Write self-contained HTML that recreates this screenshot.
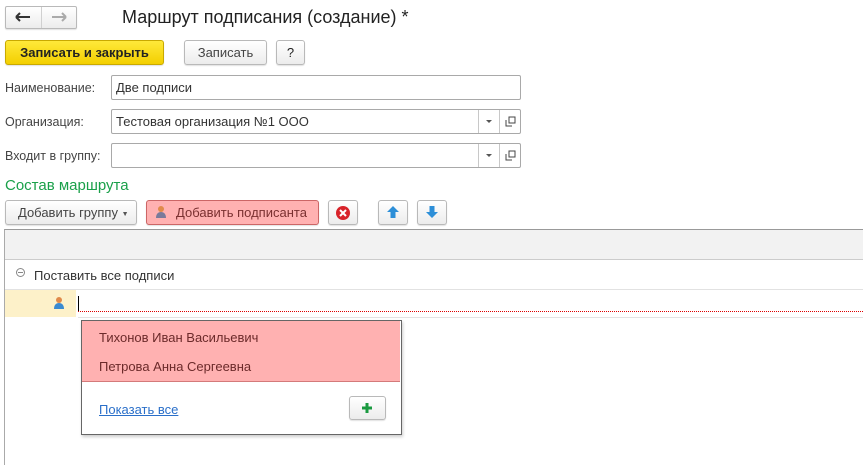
<!DOCTYPE html>
<html><head><meta charset="utf-8"><style>
*{box-sizing:border-box;margin:0;padding:0}
body{width:863px;height:465px;overflow:hidden;background:#fff;font-family:"Liberation Sans",Arial,sans-serif;font-size:13px;color:#333;position:relative}
.a{position:absolute}
.btn{position:absolute;border:1px solid #b9b9b9;border-radius:3px;background:linear-gradient(#fff,#ececec);text-align:center;color:#444;box-shadow:0 1px 1px rgba(0,0,0,.12)}
.inp{position:absolute;border:1px solid #a9a9a9;border-radius:2px;background:#fff;padding-left:4px;line-height:24px;color:#333}
.lbl{position:absolute;color:#444;font-size:12.5px}
</style></head><body>
<div class="btn" style="left:5px;top:6px;width:72px;height:23px;border-radius:2px"></div>
<div class="a" style="left:41px;top:7px;width:1px;height:21px;background:#d0d0d0"></div>
<svg class="a" style="left:15px;top:12px" width="16" height="10"><path d="M1 5h14M1 5l4-4M1 5l4 4" stroke="#333" stroke-width="2" fill="none"/></svg>
<svg class="a" style="left:51px;top:12px" width="16" height="10"><path d="M1 5h14M15 5l-4-4M15 5l-4 4" stroke="#aaa" stroke-width="2" fill="none"/></svg>
<div class="a" style="left:122px;top:7px;font-size:18px;color:#222">Маршрут подписания (создание) *</div>

<div class="btn" style="left:5px;top:40px;width:159px;height:25px;background:linear-gradient(#ffe93a,#f3cf00);border-color:#c9a900;color:#222;font-weight:bold;line-height:23px">Записать и закрыть</div>
<div class="btn" style="left:184px;top:40px;width:83px;height:25px;line-height:23px">Записать</div>
<div class="btn" style="left:276px;top:40px;width:29px;height:25px;line-height:23px;color:#222">?</div>

<div class="lbl" style="left:5px;top:81px">Наименование:</div>
<div class="inp" style="left:111px;top:75px;width:410px;height:25px">Две подписи</div>
<div class="lbl" style="left:5px;top:115px">Организация:</div>
<div class="inp" style="left:111px;top:109px;width:410px;height:25px">Тестовая организация №1 ООО</div>
<div class="lbl" style="left:5px;top:149px">Входит в группу:</div>
<div class="inp" style="left:111px;top:143px;width:410px;height:25px"></div>
<div class="a" style="left:478px;top:110px;width:1px;height:23px;background:#c8c8c8"></div>
<div class="a" style="left:499px;top:110px;width:1px;height:23px;background:#c8c8c8"></div>
<div class="a" style="left:478px;top:144px;width:1px;height:23px;background:#c8c8c8"></div>
<div class="a" style="left:499px;top:144px;width:1px;height:23px;background:#c8c8c8"></div>
<div class="a" style="left:486px;top:120px;border:3px solid transparent;border-top:3px solid #555"></div>
<div class="a" style="left:486px;top:154px;border:3px solid transparent;border-top:3px solid #555"></div>
<svg class="a" style="left:505px;top:116px" width="11" height="11"><path d="M4 1h6v6h-6z M1 4v6h6" fill="none" stroke="#444"/></svg>
<svg class="a" style="left:505px;top:150px" width="11" height="11"><path d="M4 1h6v6h-6z M1 4v6h6" fill="none" stroke="#444"/></svg>

<div class="a" style="left:5px;top:177px;font-size:15px;color:#1aa04a">Состав маршрута</div>
<div class="btn" style="left:5px;top:200px;width:132px;height:25px;line-height:23px;text-align:left;padding-left:12px">Добавить группу <span style="font-size:7px;color:#555;vertical-align:1px">&#9660;</span></div>
<div class="btn" style="left:146px;top:200px;width:173px;height:25px;line-height:23px;background:#ffb1b1;border-color:#c66;color:#7a3030;padding-left:18px">Добавить подписанта</div>
<svg class="a" style="left:155px;top:205px" width="12" height="14"><circle cx="6" cy="4" r="3" fill="#e08a4a"/><path d="M1 13c0-4 2-6 5-6s5 2 5 6z" fill="#7a7a9a"/></svg>
<div class="btn" style="left:328px;top:200px;width:30px;height:25px"></div>
<svg class="a" style="left:335px;top:205px" width="16" height="16"><circle cx="8" cy="8" r="7" fill="#d8232a"/><path d="M5 5l6 6M11 5l-6 6" stroke="#fff" stroke-width="2"/></svg>
<div class="btn" style="left:378px;top:200px;width:30px;height:25px"></div>
<svg class="a" style="left:386px;top:205px" width="14" height="14"><path d="M7 1l6 6h-3.5v6h-5v-6h-3.5z" fill="#2d8fd8"/></svg>
<div class="btn" style="left:417px;top:200px;width:30px;height:25px"></div>
<svg class="a" style="left:425px;top:205px" width="14" height="14"><path d="M7 13l6-6h-3.5v-6h-5v6h-3.5z" fill="#2d8fd8"/></svg>

<div class="a" style="left:4px;top:229px;width:859px;height:236px;border-left:1px solid #aaa;border-top:1px solid #999"></div>
<div class="a" style="left:5px;top:230px;width:858px;height:30px;background:#f2f2f2;border-bottom:1px solid #ccc"></div>
<div class="a" style="left:16px;top:268px;width:9px;height:9px;border:1px solid #888;border-radius:50%"></div>
<div class="a" style="left:18px;top:272px;width:5px;height:1px;background:#888"></div>
<div class="a" style="left:34px;top:268px;color:#333">Поставить все подписи</div>
<div class="a" style="left:5px;top:289px;width:858px;height:1px;background:#e2e2e2"></div>
<div class="a" style="left:5px;top:290px;width:71px;height:27px;background:#fdf1c9"></div>
<svg class="a" style="left:53px;top:296px" width="12" height="14"><circle cx="6" cy="4" r="3" fill="#e08a4a"/><path d="M1 13c0-4 2-6 5-6s5 2 5 6z" fill="#3a8ad0"/></svg>
<div class="a" style="left:78px;top:296px;width:1px;height:15px;background:#000"></div>
<div class="a" style="left:78px;top:311px;width:785px;border-top:1px dotted #d00"></div>
<div class="a" style="left:78px;top:317px;width:785px;height:1px;background:#e2e2e2"></div>

<div class="a" style="left:81px;top:320px;width:321px;height:115px;border:1px solid #666;background:#fff;box-shadow:1px 2px 3px rgba(0,0,0,.2)"></div>
<div class="a" style="left:82px;top:321px;width:318px;height:61px;background:#ffb1b1;border-bottom:1px solid #d47a7a"></div>
<div class="a" style="left:99px;top:330px;color:#6b2a2a">Тихонов Иван Васильевич</div>
<div class="a" style="left:99px;top:359px;color:#6b2a2a">Петрова Анна Сергеевна</div>
<div class="a" style="left:99px;top:402px;color:#2a6fc9;text-decoration:underline">Показать все</div>
<div class="btn" style="left:349px;top:396px;width:37px;height:24px"></div>
<svg class="a" style="left:361px;top:402px" width="12" height="12"><path d="M6 1v10M1 6h10" stroke="#1a9a40" stroke-width="3"/></svg>
</body></html>
